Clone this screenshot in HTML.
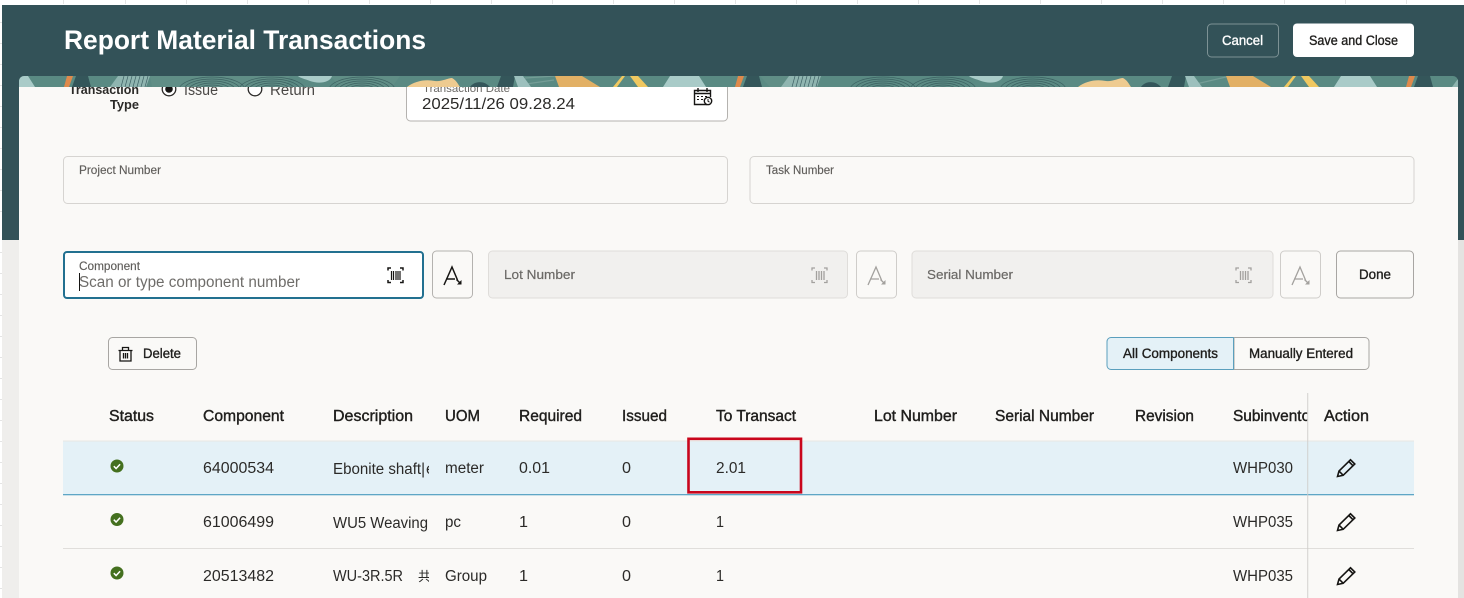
<!DOCTYPE html>
<html lang="en">
<head>
<meta charset="utf-8">
<title>Report Material Transactions</title>
<style>
html,body{margin:0;padding:0;background:#fff;width:1464px;height:598px;overflow:hidden}
svg{display:block}
text{font-family:"Liberation Sans","Noto Sans CJK SC",sans-serif;fill:#2b2a28;font-size:15.5px}
.b{font-weight:bold}
.h{fill:#1f1e1c;font-size:15.5px;stroke:#1f1e1c;stroke-width:.4px}
.btn{font-size:13.5px;fill:#1f1e1c;stroke:#1f1e1c;stroke-width:.35px}
.lab{font-size:11.5px;fill:#5f5d5a;stroke:#5f5d5a;stroke-width:.15px}
.dis{font-size:12.5px;fill:#6b6966;stroke:#6b6966;stroke-width:.2px}
.ic{fill:none;stroke:#161513;stroke-width:1.4}
.icd{fill:none;stroke:#a3a19e;stroke-width:1.3}
</style>
</head>
<body>
<svg xmlns="http://www.w3.org/2000/svg" width="1464" height="598" viewBox="0 0 1464 598">
<defs>
<clipPath id="bannerClip"><path d="M19 87V81a5 5 0 0 1 5-5H1453a5 5 0 0 1 5 5V87Z"/></clipPath>
<clipPath id="descClip"><rect x="320" y="440" width="109" height="158"/></clipPath>
<clipPath id="subClip"><rect x="1225" y="400" width="82.500" height="40"/></clipPath>
<g id="fp" fill="none" stroke="#2f5054" stroke-width=".7" opacity=".7">
<ellipse cx="0" cy="14" rx="8" ry="3"/><ellipse cx="0" cy="14" rx="13" ry="5"/><ellipse cx="0" cy="14" rx="18" ry="7"/><ellipse cx="0" cy="14" rx="23" ry="9"/><ellipse cx="0" cy="14" rx="28" ry="11"/><ellipse cx="0" cy="14" rx="33" ry="13"/>
</g>
<g id="tile">
<path d="M-1 76H28L35 87H-8Z" fill="#a9cbc8"/>
<path d="M67 76H73L69 87H64Z" fill="#df8a4c"/>
<path d="M76 76H88L91 87H72Z" fill="#34565a"/>
<path d="M110 87L118 76H150L146 87Z" fill="#8fb5b0"/>
<g stroke="#3e6265" stroke-width=".7"><path d="M121 87l3-11M125 87l3-11M129 87l3-11M133 87l3-11M137 87l3-11M141 87l3-11M145 87l3-11"/></g>
<use href="#fp" transform="translate(212,76)"/>
<use href="#fp" transform="translate(272,76)"/>
<use href="#fp" transform="translate(362,76)"/>
<path d="M298 76H332C330 83 318 84 310 81C305 79 300 78 298 76Z" fill="#a9cbc8"/>
<path d="M407 87C415 81 425 79 435 81C441 82 448 78 452 78C456 80 458 84 460 87Z" fill="#eecb90"/>
<path d="M470 87C474 81 484 80 490 87Z" fill="#34565a"/>
<path d="M497 87L501 76H515L513 87Z" fill="#34565a"/>
<path d="M514 76H523L531 87H518Z" fill="#9cc0bd"/>
<path d="M555 76H582L600 87H559Z" fill="#e2b065"/>
<path d="M613 87L622 76H625L617 87Z" fill="#f0c860"/>
<path d="M630 76H638L648 87H638Z" fill="#f0c860"/>
</g>
</defs>

<!-- outer background -->
<rect width="1464" height="598" fill="#ffffff"/>
<g stroke="#e4e4e4" stroke-width="1">
<path d="M63.500 0V4M125.500 0V4M186.500 0V4M247.500 0V4M308.500 0V4M369.500 0V4M430.500 0V4M491.500 0V4M552.500 0V4M613.500 0V4M674.500 0V4M735.500 0V4M796.500 0V4M857.500 0V4M918.500 0V4M979.500 0V4M1040.500 0V4M1101.500 0V4M1162.500 0V4M1223.500 0V4M1284.500 0V4M1345.500 0V4M1406.500 0V4"/>
<path d="M0 22.500H2M0 43.500H2M0 64.500H2M0 85.500H2M0 106.500H2M0 127.500H2M0 148.500H2M0 169.500H2M0 190.500H2M0 211.500H2M0 252.500H2M0 273.500H2M0 294.500H2M0 315.500H2M0 336.500H2M0 357.500H2M0 378.500H2M0 399.500H2M0 420.500H2M0 441.500H2M0 462.500H2M0 483.500H2M0 504.500H2M0 525.500H2M0 546.500H2M0 567.500H2M0 588.500H2"/>
</g>
<rect x="2" y="240" width="17" height="358" fill="#efeeec"/>
<rect x="1458" y="240" width="6" height="358" fill="#e4e3e1"/>
<rect x="2" y="5" width="1462" height="235" fill="#335258"/>
<rect x="19" y="80" width="1439" height="518" fill="#faf9f7"/>

<!-- form row 1 -->
<text class="b" x="69" y="94" textLength="70" lengthAdjust="spacingAndGlyphs" style="font-size:13px">Transaction</text>
<text class="b" x="110" y="109" textLength="29" lengthAdjust="spacingAndGlyphs" style="font-size:13px">Type</text>
<circle cx="169" cy="89" r="6.800" fill="#fff" stroke="#2b2a28" stroke-width="1.300"/>
<circle cx="169" cy="89" r="3.800" fill="#161513"/>
<text x="184" y="95" textLength="34" lengthAdjust="spacingAndGlyphs" style="fill:#4a4846">Issue</text>
<circle cx="255" cy="89" r="6.800" fill="#fff" stroke="#2b2a28" stroke-width="1.300"/>
<text x="270" y="95" textLength="45" lengthAdjust="spacingAndGlyphs" style="fill:#4a4846">Return</text>
<rect x="406.500" y="80" width="321" height="41" rx="4" fill="#fff" stroke="#b4b2af"/>
<text x="423" y="92" textLength="87" lengthAdjust="spacingAndGlyphs" style="fill:#6b6966;font-size:11px">Transaction Date</text>
<text x="422" y="109" textLength="153" lengthAdjust="spacingAndGlyphs" style="font-size:16px;fill:#2b2a28">2025/11/26 09.28.24</text>
<g class="ic">
<path d="M707 104.500H694.500V90.500H710.500V97"/>
<path d="M698 88V92M707 88V92M694.500 93.500H710.500" />
<path d="M697 96.500h2M701 96.500h2M705 96.500h2M697 99.500h2M701 99.500h2" stroke-width="1.100"/>
<circle cx="708" cy="101" r="3.700" fill="#fff"/>
<path d="M708 99v2.200l1.500 1" stroke-width="1"/>
</g>

<!-- banner -->
<g clip-path="url(#bannerClip)">
<rect x="19" y="76" width="1439" height="11" fill="#5a8a83"/>
<path d="M150 76H290L285 87H152ZM330 76H400L392 87H340ZM760 76H800L790 87H770Z" fill="#629088" opacity=".7"/>
<path d="M525 78l30-2M526 84l28-4M1196 84l30-7" stroke="#86aaa4" stroke-width="1.200" fill="none" opacity=".6"/>
<use href="#tile"/>
<use href="#tile" x="671"/>
<use href="#tile" x="1342"/>
</g>

<!-- header -->
<text class="b" x="64" y="49" textLength="362" lengthAdjust="spacingAndGlyphs" style="font-size:27px;fill:#ffffff">Report Material Transactions</text>
<rect x="1207.500" y="24" width="71" height="33" rx="4" fill="none" stroke="#7d9295" stroke-width="1"/>
<text class="btn" x="1222" y="45" textLength="41" lengthAdjust="spacingAndGlyphs" style="fill:#fff;stroke:#fff">Cancel</text>
<rect x="1293" y="23.500" width="121" height="33.500" rx="4" fill="#fff"/>
<text class="btn" x="1309" y="45" textLength="89" lengthAdjust="spacingAndGlyphs">Save and Close</text>

<!-- project/task -->
<rect x="63.500" y="156.500" width="664" height="47" rx="4" fill="#faf9f7" stroke="#d6d4d1"/>
<text class="lab" x="79" y="174" textLength="82" lengthAdjust="spacingAndGlyphs">Project Number</text>
<rect x="750" y="156.500" width="664" height="47" rx="4" fill="#faf9f7" stroke="#d6d4d1"/>
<text class="lab" x="766" y="174" textLength="68" lengthAdjust="spacingAndGlyphs">Task Number</text>

<!-- scan row -->
<rect x="64" y="252" width="359" height="46" rx="3" fill="#fff" stroke="#227090" stroke-width="2"/>
<text class="lab" x="79" y="270" textLength="61" lengthAdjust="spacingAndGlyphs">Component</text>
<text x="79" y="287" textLength="221" lengthAdjust="spacingAndGlyphs" style="fill:#6f6d6a">Scan or type component number</text>
<rect x="79" y="273" width="1" height="18" fill="#161513"/>
<g class="ic">
<path d="M388 270.500V268H391M400 268H403V270.500M403 280V282.500H400M391 282.500H388V280" stroke-width="1.500"/>
<path d="M391.500 271V280M393.500 271V280M396 271V280M398 271V280M400 271V280" stroke-width="1.200"/>
</g>
<rect x="432.500" y="251" width="40" height="47" rx="4" fill="#faf9f7" stroke="#b4b2af"/>
<g class="ic">
<path d="M444 285L452 267L457.500 280M446 279H455" stroke-width="1.500"/>
<path d="M456.500 279.500L460 283" stroke-width="1.500"/>
<path d="M461.500 280V284.500H457Z" fill="#161513" stroke="none"/>
</g>

<rect x="488.500" y="251" width="359" height="47" rx="4" fill="#f1f0ee" stroke="#dfddda"/>
<text class="dis" x="504" y="279" textLength="71" lengthAdjust="spacingAndGlyphs">Lot Number</text>
<g class="icd" transform="translate(424,0)">
<path d="M388 270.500V268H391M400 268H403V270.500M403 280V282.500H400M391 282.500H388V280"/>
<path d="M392.500 271V280M395 271V280M397.500 271V280M400 271V280"/>
</g>
<rect x="856.500" y="251" width="40" height="47" rx="4" fill="#faf9f7" stroke="#cfcdca"/>
<g class="icd" transform="translate(424,0)">
<path d="M444 285L452 267L457.500 280M446 279H455"/>
<path d="M456.500 279.500L460 283"/>
<path d="M461.500 280V284.500H457Z" fill="#a3a19e" stroke="none"/>
</g>

<rect x="912" y="251" width="361" height="47" rx="4" fill="#f1f0ee" stroke="#dfddda"/>
<text class="dis" x="927" y="279" textLength="86" lengthAdjust="spacingAndGlyphs">Serial Number</text>
<g class="icd" transform="translate(848,0)">
<path d="M388 270.500V268H391M400 268H403V270.500M403 280V282.500H400M391 282.500H388V280"/>
<path d="M392.500 271V280M395 271V280M397.500 271V280M400 271V280"/>
</g>
<rect x="1280.500" y="251" width="40" height="47" rx="4" fill="#faf9f7" stroke="#cfcdca"/>
<g class="icd" transform="translate(848,0)">
<path d="M444 285L452 267L457.500 280M446 279H455"/>
<path d="M456.500 279.500L460 283"/>
<path d="M461.500 280V284.500H457Z" fill="#a3a19e" stroke="none"/>
</g>

<rect x="1336.500" y="251" width="77" height="47" rx="4" fill="#faf9f7" stroke="#a8a6a3"/>
<text class="btn" x="1359" y="279" textLength="32" lengthAdjust="spacingAndGlyphs">Done</text>

<!-- toolbar -->
<rect x="108.500" y="337.500" width="88" height="32" rx="4" fill="#faf9f7" stroke="#a8a6a3"/>
<g class="ic">
<path d="M118.500 350.500H132.500M122.500 350.500V347.500H128.500V350.500M120 350.500V361H131V350.500M123.500 353V358.500M125.500 353V358.500M127.500 353V358.500" stroke-width="1.300"/>
</g>
<text class="btn" x="143" y="358" textLength="38" lengthAdjust="spacingAndGlyphs">Delete</text>
<path d="M1111 337.500H1234V369.500H1111a4 4 0 0 1-4-4V341.500a4 4 0 0 1 4-4Z" fill="#e4f1f7" stroke="#5a9fbd"/>
<path d="M1234 337.500H1365a4 4 0 0 1 4 4V365.500a4 4 0 0 1-4 4H1234Z" fill="#faf9f7" stroke="#a8a6a3"/>
<path d="M1233.500 337.500V369.500" stroke="#5a9fbd"/>
<text class="btn" x="1123" y="358" textLength="95" lengthAdjust="spacingAndGlyphs">All Components</text>
<text class="btn" x="1249" y="358" textLength="104" lengthAdjust="spacingAndGlyphs">Manually Entered</text>

<!-- table rows -->
<rect x="63" y="441" width="1351" height="53" fill="#e4f1f7"/>
<rect x="63" y="440.500" width="1351" height="1" fill="#e8e6e3"/>
<rect x="63" y="494" width="1351" height="1.300" fill="#5ea6c6"/>
<rect x="63" y="548" width="1351" height="1" fill="#e0dedb"/>

<!-- table header -->
<text class="h" x="109" y="421" textLength="45" lengthAdjust="spacingAndGlyphs">Status</text>
<text class="h" x="203" y="421" textLength="81" lengthAdjust="spacingAndGlyphs">Component</text>
<text class="h" x="333" y="421" textLength="80" lengthAdjust="spacingAndGlyphs">Description</text>
<text class="h" x="445" y="421" textLength="35" lengthAdjust="spacingAndGlyphs">UOM</text>
<text class="h" x="519" y="421" textLength="63" lengthAdjust="spacingAndGlyphs">Required</text>
<text class="h" x="622" y="421" textLength="45" lengthAdjust="spacingAndGlyphs">Issued</text>
<text class="h" x="716" y="421" textLength="80" lengthAdjust="spacingAndGlyphs">To Transact</text>
<text class="h" x="874" y="421" textLength="83" lengthAdjust="spacingAndGlyphs">Lot Number</text>
<text class="h" x="995" y="421" textLength="99" lengthAdjust="spacingAndGlyphs">Serial Number</text>
<text class="h" x="1135" y="421" textLength="59" lengthAdjust="spacingAndGlyphs">Revision</text>
<g clip-path="url(#subClip)"><text class="h" x="1233" y="421" textLength="90" lengthAdjust="spacingAndGlyphs">Subinventory</text></g>
<text class="h" x="1324" y="421" textLength="45" lengthAdjust="spacingAndGlyphs">Action</text>

<!-- status icons -->
<g>
<circle cx="117" cy="466" r="6.500" fill="#44701f"/><path d="M113.800 466.200l2.300 2.300 4-4.300" fill="none" stroke="#fff" stroke-width="1.500"/>
<circle cx="117" cy="519.500" r="6.500" fill="#44701f"/><path d="M113.800 519.700l2.300 2.300 4-4.300" fill="none" stroke="#fff" stroke-width="1.500"/>
<circle cx="117" cy="573" r="6.500" fill="#44701f"/><path d="M113.800 573.200l2.300 2.300 4-4.300" fill="none" stroke="#fff" stroke-width="1.500"/>
</g>

<!-- row 1 -->
<text x="203" y="473" textLength="71" lengthAdjust="spacingAndGlyphs">64000534</text>
<g clip-path="url(#descClip)">
<text x="333" y="474" textLength="92" lengthAdjust="spacingAndGlyphs">Ebonite shaft|</text>
<text x="426" y="474">e</text>
</g>
<text x="445" y="473" textLength="39" lengthAdjust="spacingAndGlyphs">meter</text>
<text x="519" y="473" textLength="31" lengthAdjust="spacingAndGlyphs">0.01</text>
<text x="622" y="473" textLength="9" lengthAdjust="spacingAndGlyphs">0</text>
<text x="716" y="473" textLength="30" lengthAdjust="spacingAndGlyphs">2.01</text>
<text x="1233" y="473" textLength="60" lengthAdjust="spacingAndGlyphs">WHP030</text>

<!-- row 2 -->
<text x="203" y="527" textLength="71" lengthAdjust="spacingAndGlyphs">61006499</text>
<text x="333" y="528" textLength="95" lengthAdjust="spacingAndGlyphs">WU5 Weaving</text>
<text x="445" y="527" textLength="16" lengthAdjust="spacingAndGlyphs">pc</text>
<text x="519" y="527" textLength="9" lengthAdjust="spacingAndGlyphs">1</text>
<text x="622" y="527" textLength="9" lengthAdjust="spacingAndGlyphs">0</text>
<text x="716" y="527" textLength="8" lengthAdjust="spacingAndGlyphs">1</text>
<text x="1233" y="527" textLength="60" lengthAdjust="spacingAndGlyphs">WHP035</text>

<!-- row 3 -->
<text x="203" y="581" textLength="71" lengthAdjust="spacingAndGlyphs">20513482</text>
<g clip-path="url(#descClip)">
<text x="333" y="581" textLength="70" lengthAdjust="spacingAndGlyphs">WU-3R.5R</text>
<text x="418" y="581" style="font-size:13px">共</text>
</g>
<text x="445" y="581" textLength="42" lengthAdjust="spacingAndGlyphs">Group</text>
<text x="519" y="581" textLength="9" lengthAdjust="spacingAndGlyphs">1</text>
<text x="622" y="581" textLength="9" lengthAdjust="spacingAndGlyphs">0</text>
<text x="716" y="581" textLength="8" lengthAdjust="spacingAndGlyphs">1</text>
<text x="1233" y="581" textLength="60" lengthAdjust="spacingAndGlyphs">WHP035</text>

<!-- sticky column divider -->
<rect x="1307" y="393" width="1.300" height="205" fill="#cfcdca" opacity=".7"/>

<!-- pencils -->
<g class="ic" fill="none" style="stroke-width:1.600">
<path d="M1337.500 476.500L1339 471L1350.500 459.800L1354.800 464L1343.200 475.300ZM1339 471L1343.200 475.300M1348.800 461.500L1353 465.700"/>
<path d="M1337.500 530.500L1339 525L1350.500 513.800L1354.800 518L1343.200 529.300ZM1339 525L1343.200 529.300M1348.800 515.500L1353 519.700"/>
<path d="M1337.500 584.500L1339 579L1350.500 567.800L1354.800 572L1343.200 583.300ZM1339 579L1343.200 583.300M1348.800 569.500L1353 573.700"/>
</g>

<!-- red annotation -->
<rect x="688.500" y="438.800" width="112.500" height="53.500" fill="none" stroke="#c9061c" stroke-width="2.600"/>
</svg>
</body>
</html>
